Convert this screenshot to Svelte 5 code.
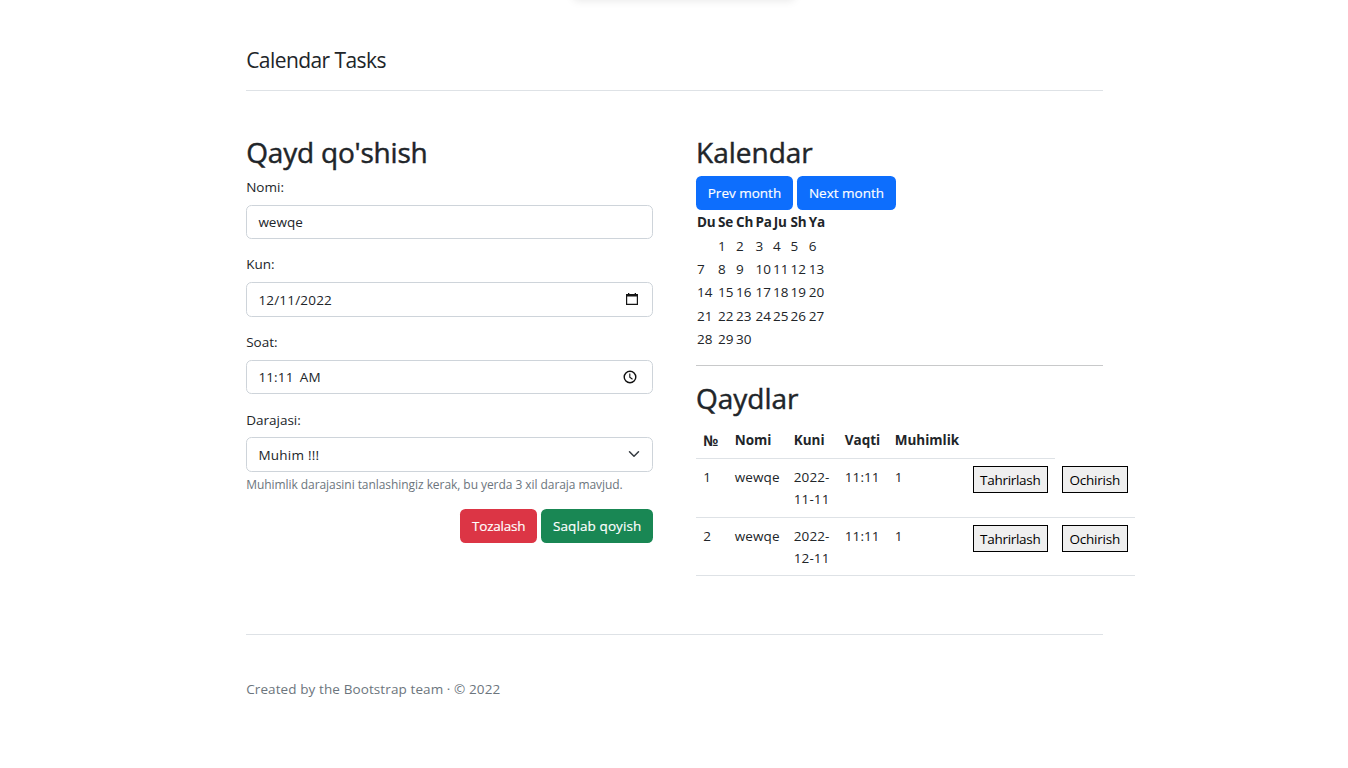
<script>
  const days = ['Du', 'Se', 'Ch', 'Pa', 'Ju', 'Sh', 'Ya'];
  const weeks = [
    ['', 1, 2, 3, 4, 5, 6],
    [7, 8, 9, 10, 11, 12, 13],
    [14, 15, 16, 17, 18, 19, 20],
    [21, 22, 23, 24, 25, 26, 27],
    [28, 29, 30, '', '', '', '']
  ];
  const notes = [
    { name: 'wewqe', year: '2022-', day: '11-11', time: '11:11', level: 1 },
    { name: 'wewqe', year: '2022-', day: '12-11', time: '11:11', level: 1 }
  ];
</script>

<div class="toast-shadow"></div>
<div class="container">
  <header><span>Calendar Tasks</span></header>
  <main>
    <section>
      <h2 class="t-add">Qayd qo'shish</h2>
      <div class="group">
        <label for="name">Nomi:</label>
        <div class="control"><input id="name" value="wewqe" /></div>
      </div>
      <div class="group">
        <label for="date">Kun:</label>
        <div class="control">
          <input id="date" class="date" value="12/11/2022" />
          <svg class="cal" width="12" height="12" viewBox="0 0 12 12"><path d="M2 0h1.3v1h5.4V0H10v1h2v11H0V1h2zM1.2 3.6v7.2h9.6V3.6z" fill="#151515" fill-rule="evenodd" /></svg>
        </div>
      </div>
      <div class="group">
        <label for="time">Soat:</label>
        <div class="control">
          <input id="time" class="time" value="11:11 AM" />
          <svg class="clock" width="14" height="14" viewBox="0 0 14 14" fill="none" stroke="#101010"><circle cx="7" cy="7" r="5.8" stroke-width="1.4" /><path d="M6.8 3.4v3.9l2.7 1.9" stroke-width="1.1" /></svg>
        </div>
      </div>
      <div class="group last">
        <label for="level">Darajasi:</label>
        <div class="control">
          <input id="level" class="level" value="Muhim !!!" />
          <svg class="chev" width="12" height="12" viewBox="0 0 16 16" fill="none" stroke="#343a40" stroke-width="2" stroke-linecap="round" stroke-linejoin="round"><path d="m2 5 6 6 6-6" /></svg>
        </div>
        <small>Muhimlik darajasini tanlashingiz kerak, bu yerda 3 xil daraja mavjud.</small>
      </div>
      <div class="actions">
        <button class="btn danger">Tozalash</button>
        <button class="btn success">Saqlab qoyish</button>
      </div>
    </section>

    <section>
      <h2 class="t-cal">Kalendar</h2>
      <div class="months">
        <button class="btn prev">Prev month</button>
        <button class="btn next">Next month</button>
      </div>
      <div class="calendar">
        {#each days as d}<b>{d}</b>{/each}
        {#each weeks as week}
          {#each week as d}<span>{d}</span>{/each}
        {/each}
      </div>
      <hr />
      <h2 class="t-notes">Qaydlar</h2>
      <div class="notes">
        <div class="row head">
          <b class="num">№</b><b>Nomi</b><b>Kuni</b><b>Vaqti</b><b>Muhimlik</b><b></b>
        </div>
        {#each notes as n, i}
          <div class="row">
            <span>{i + 1}</span>
            <span>{n.name}</span>
            <span>{n.year}<br />{n.day}</span>
            <span>{n.time}</span>
            <span>{n.level}</span>
            <div><button class="plain edit">Tahrirlash</button></div>
            <div><button class="plain del">Ochirish</button></div>
          </div>
        {/each}
      </div>
    </section>
  </main>
  <footer>Created by the Bootstrap team · © 2022</footer>
</div>

<style>
  :global(body) {
    background: #fff;
    overflow: hidden;
  }
  .container, .container button, .container input {
    font-family: "Open Sans", "Noto Sans", sans-serif;
    font-size: 13.5px;
    line-height: 21.6px;
  }
  .container {
    width: 856.8px;
    margin-left: 246.2px;
    padding-top: 43.2px;
    color: #212529;
  }
  .toast-shadow {
    position: absolute;
    left: 574px;
    top: -20px;
    width: 220px;
    height: 18px;
    box-shadow: 0 2px 10px rgba(0, 0, 0, 0.11);
  }
  header {
    box-sizing: border-box;
    height: 47.8px;
    border-bottom: 1px solid #dee2e6;
    font-size: 21px;
    letter-spacing: -0.57px;
    line-height: 35px;
    margin-bottom: 43px;
  }
  main {
    display: grid;
    grid-template-columns: 407px 407px;
    column-gap: 42.8px;
    height: 499.8px;
    border-bottom: 1px solid #dee2e6;
  }
  h2 {
    margin: 0 0 7.2px;
    font-size: 28px;
    font-weight: 500;
    line-height: 34.6px;
    -webkit-text-stroke: 0.45px currentColor;
  }
  .t-add, .t-cal {
    padding-top: 0.8px;
    margin-bottom: 6.4px;
  }
  .t-add { letter-spacing: -0.2px; }
  .group {
    margin-bottom: 14.4px;
  }
  label {
    display: block;
    padding-top: 0.9px;
    margin-bottom: 6.3px;
  }
  .last label {
    padding-top: 1.4px;
    margin-bottom: 5.8px;
  }
  .control {
    box-sizing: border-box;
    height: 34.4px;
    display: flex;
    align-items: center;
    border: 1px solid #ced4da;
    border-radius: 5.4px;
    padding: 0 12px 0 11.2px;
  }
  .control input {
    flex: 1;
    min-width: 0;
    border: 0;
    outline: 0;
    padding: 2px 0 0;
    background: none;
    color: #212529;
  }
  .control .date { letter-spacing: 0.2px; }
  .control .time { letter-spacing: 0.15px; word-spacing: 2.6px; }
  .control .level { letter-spacing: 0.25px; }
  .cal { margin: 0 2px 1px 0; }
  .clock { margin: 0 2.8px 0.6px 0; }
  small {
    display: block;
    padding-top: 0.8px;
    margin-top: 3.6px;
    font-size: 12px;
    letter-spacing: -0.06px;
    line-height: 18.9px;
    margin-bottom: -1.6px;
    color: #6c757d;
    white-space: nowrap;
  }
  .last { margin-bottom: 15.2px; }
  .actions, .months {
    display: flex;
    gap: 4px;
  }
  .actions {
    justify-content: flex-end;
  }
  .btn {
    height: 34.4px;
    padding: 1.2px 0 0;
    border: 0;
    border-radius: 5.4px;
    background: #0d6efd;
    color: #fff;
    white-space: nowrap;
    -webkit-text-stroke: 0.15px currentColor;
  }
  .container .danger { background: #dc3545; width: 77px; letter-spacing: -0.2px; }
  .container .success { background: #198754; width: 112px; letter-spacing: 0.1px; }
  .prev { width: 97px; }
  .next { width: 99px; }
  .calendar {
    display: grid;
    grid-template-columns: 21px 18px 19.5px 17.5px 17.5px 18.3px 18px;
    grid-template-rows: 23.7px;
    grid-auto-rows: 23.35px;
    line-height: 23.4px;
    padding-left: 1px;
    margin-top: 0.9px;
    width: max-content;
  }
  .calendar b { letter-spacing: -0.15px; }
  .calendar b:nth-child(5) { padding-left: 0.8px; }
  hr {
    height: 1px;
    border: 0;
    margin: 13.65px 0 14.8px;
    background: #c8c9ca;
  }
  .notes {
    width: 438.8px;
  }
  .row {
    box-sizing: border-box;
    height: 58.6px;
    display: grid;
    grid-template-columns: 31.6px 59px 51px 50px 78px 89px 80px;
    border-bottom: 1px solid #dee2e6;
  }
  .row > * {
    padding: 7.2px 0 0 7.2px;
  }
  .row > span {
    padding-top: 8.2px;
    letter-spacing: 0.1px;
  }
  .head {
    width: 358.6px;
    height: 36.6px;
    grid-template-columns: 31.6px 59px 51px 50px 78px 89px;
  }
  .num {
    font-size: 14.6px;
    line-height: 20.4px;
  }
  .plain {
    display: block;
    box-sizing: border-box;
    height: 27px;
    padding: 1.6px 0 0;
    border: 1px solid #000;
    background: #efefef;
    color: #000;
    letter-spacing: -0.2px;
  }
  .edit { width: 75px; letter-spacing: -0.3px; }
  .del { width: 66px; }
  footer {
    padding-top: 44.2px;
    letter-spacing: 0.1px;
    color: #6c757d;
  }
</style>
